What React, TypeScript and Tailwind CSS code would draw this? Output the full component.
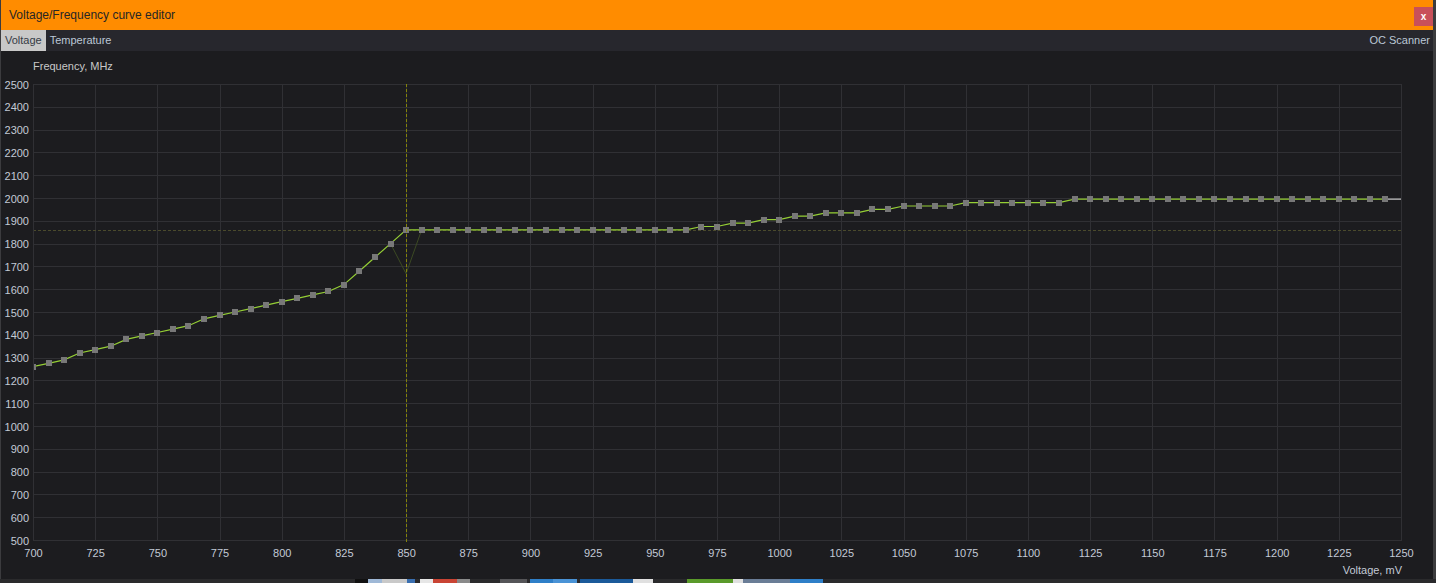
const X0 = 32
const X1 = 1400
const Y0 = 7
const Y1 = 463

const vx = (mv: number) => X0 + ((mv - 700) / 550) * (X1 - X0)
const fy = (f: number) => Y0 + ((2500 - f) / 2000) * (Y1 - Y0)

const rep = (v: number, n: number) => Array.from({ length: n }, () => v)

// curve points, one every 6.25 mV from 700 mV
const freqs: number[] = [
  1260, 1275, 1290, 1320, 1335, 1350, 1380, 1395, 1410, 1425, 1440, 1470, 1485,
  1500, 1515, 1530, 1545, 1560, 1575, 1590, 1620, 1680, 1740, 1800, 1860,
  ...rep(1860, 18),
  ...rep(1875, 2),
  ...rep(1890, 2),
  ...rep(1905, 2),
  ...rep(1920, 2),
  ...rep(1935, 3),
  ...rep(1950, 2),
  ...rep(1965, 4),
  ...rep(1980, 7),
  ...rep(1995, 21),
]

const points = freqs.map((f, i) => ({ x: vx(700 + i * 6.25), y: fy(f) }))

const vTicks = Array.from({ length: 23 }, (_, i) => 700 + i * 25)
const fTicks = Array.from({ length: 21 }, (_, i) => 500 + i * 100)

const px = (v: number) => Math.round(v) + 0.5

const desktop = [
  { w: 355, c: 'bg-[#2a2a2c]' },
  { w: 13, c: 'bg-[#111111]' },
  { w: 14, c: 'bg-[#9fb8d6]' },
  { w: 25, c: 'bg-[#c9c9c9]' },
  { w: 8, c: 'bg-[#3a6fb0]' },
  { w: 5, c: 'bg-[#2a2a2c]' },
  { w: 13, c: 'bg-[#e6e6e6]' },
  { w: 24, c: 'bg-[#c94434]' },
  { w: 13, c: 'bg-[#8a8a8a]' },
  { w: 30, c: 'bg-[#2a2a2c]' },
  { w: 27, c: 'bg-[#555558]' },
  { w: 3, c: 'bg-[#2a2a2c]' },
  { w: 23, c: 'bg-[#2f7fc8]' },
  { w: 24, c: 'bg-[#4a93d6]' },
  { w: 3, c: 'bg-[#2a2a2c]' },
  { w: 53, c: 'bg-[#1b5a9a]' },
  { w: 20, c: 'bg-[#e0e0e0]' },
  { w: 34, c: 'bg-[#2a2a2c]' },
  { w: 46, c: 'bg-[#5a9a2a]' },
  { w: 10, c: 'bg-[#e0e0e0]' },
  { w: 47, c: 'bg-[#6a7d96]' },
  { w: 33, c: 'bg-[#2f7fc8]' },
]

function Chart() {
  const line = points.map((p) => `${p.x.toFixed(1)},${p.y.toFixed(1)}`).join(' ')
  const last = points[points.length - 1]
  const gx = vx(850)
  const ghost = `${points[23].x},${points[23].y} ${gx},${fy(1668)} ${points[25].x},${points[25].y}`

  return (
    <svg width={1432} height={502} className="block">
      <defs>
        <clipPath id="plot">
          <rect x={X0 + 1} y={Y0} width={X1 - X0} height={Y1 - Y0} />
        </clipPath>
      </defs>

      {vTicks.map((v) => (
        <line key={'gv' + v} x1={px(vx(v))} x2={px(vx(v))} y1={Y0} y2={Y1 + 0.5} stroke="#303034" />
      ))}
      {fTicks.map((f) => (
        <line key={'gh' + f} x1={X0} x2={X1 + 1} y1={px(fy(f))} y2={px(fy(f))} stroke="#303034" />
      ))}

      {fTicks.map((f) => (
        <text key={'lf' + f} x={28} y={fy(f) + 0.5} textAnchor="end" dominantBaseline="central" fontSize={11} fill="#c3cad6">
          {f}
        </text>
      ))}
      {vTicks.map((v) => (
        <text key={'lv' + v} x={vx(v) + 0.5} y={476} textAnchor="middle" dominantBaseline="central" fontSize={11} fill="#c3cad6">
          {v}
        </text>
      ))}
      <text x={1401} y={493} textAnchor="end" dominantBaseline="central" fontSize={11} fill="#c3cad6">
        Voltage, mV
      </text>

      <g clipPath="url(#plot)">
        <line x1={X0} x2={X1} y1={px(fy(1860))} y2={px(fy(1860))} stroke="#4a4a2c" strokeDasharray="3 2" />
        <polyline points={ghost} fill="none" stroke="#3c4a24" strokeWidth={1} />
        <polyline points={line} fill="none" stroke="#95cf35" strokeWidth={1.2} />
        <line x1={last.x} x2={X1} y1={last.y} y2={last.y} stroke="#c8c8c8" strokeWidth={1.2} />
        {points.map((p, i) => (
          <rect
            key={i}
            x={Math.round(p.x) - 3}
            y={Math.round(p.y) - 3}
            width={6}
            height={6}
            fill="#787878"
            shapeRendering="crispEdges"
          />
        ))}
      </g>
      <line x1={px(gx)} x2={px(gx)} y1={Y0} y2={Y1 + 3} stroke="#84840a" strokeDasharray="3 2" />
    </svg>
  )
}

export default function App() {
  return (
    <div className="w-[1436px] h-[583px] flex flex-col overflow-hidden bg-[#2a2a2c] font-['Liberation_Sans',Arial,sans-serif]">
      <div className="flex h-[579px]">
        <div className="w-[1433px] flex flex-col border-l border-[#3b3b3e]">
          <div className="h-[30px] bg-[#ff8c00] flex justify-between">
            <span className="pl-[8px] text-[12px] leading-[30px] text-[#262626]">Voltage/Frequency curve editor</span>
            <button className="mt-[7px] w-[19px] h-[19px] bg-[#c8505a] text-white text-[10px] font-bold leading-none flex items-center justify-center">
              x
            </button>
          </div>

          <div className="h-[21px] bg-[#27272d] flex items-stretch text-[11px]">
            <div className="px-[4px] bg-[#c8c8c8] text-[#353b45] flex items-center">Voltage</div>
            <div className="px-[4px] text-[#bcc7d6] flex items-center">Temperature</div>
            <div className="ml-auto pr-[3px] text-[#bcc7d6] flex items-center">OC Scanner</div>
          </div>

          <div className="flex-1 bg-[#1c1c1f] flex flex-col">
            <div className="h-[26px] pt-[4px] pl-[32px] flex items-center text-[11px] text-[#c8c8c8]">Frequency, MHz</div>
            <Chart />
          </div>
        </div>
        <div className="flex-1 bg-[#3c3c3e]" />
      </div>
      <div className="h-[4px] flex">
        {desktop.map((d, i) => (
          <div key={i} className={d.c} style={{ width: d.w }} />
        ))}
      </div>
    </div>
  )
}
